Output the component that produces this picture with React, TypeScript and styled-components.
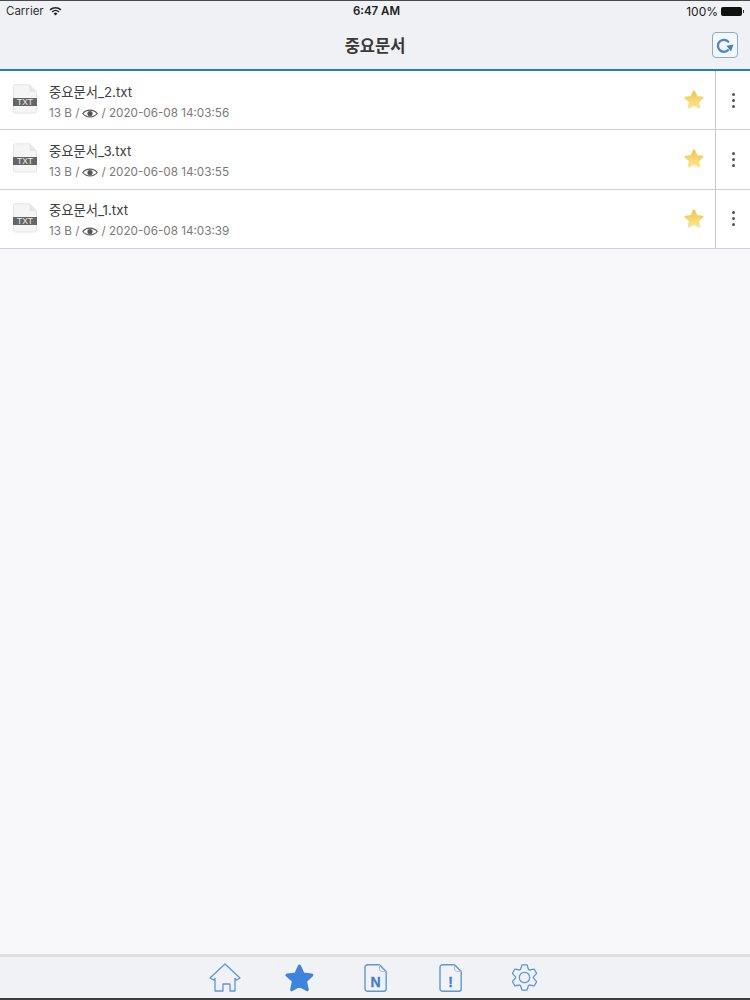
import React from "react";
import styled, { createGlobalStyle } from "styled-components";

const Global = createGlobalStyle`
  html, body { margin: 0; padding: 0; height: 100%; }
  body {
    background: #f8f8fa;
    font-family: "Inter", "Liberation Sans", "Noto Sans CJK KR", sans-serif;
    overflow: hidden;
  }
`;

const Screen = styled.div`
  width: 750px;
  height: 1000px;
  display: flex;
  flex-direction: column;
  background: #f8f8fa;
  border-top: 1px solid #4a4a4a;
  box-sizing: border-box;
`;

const Header = styled.header`
  height: 70px;
  box-sizing: border-box;
  flex: none;
  background: #eff1f4;
  border-bottom: 2px solid #1c84ba;
  display: flex;
  flex-direction: column;
`;

const StatusBar = styled.div`
  height: 20px;
  padding: 0 3px 0 6px;
  display: grid;
  grid-template-columns: 1fr auto 1fr;
  align-items: center;
  font-size: 12px;
  color: #222;
`;

const StatusLeft = styled.div`
  display: flex;
  align-items: center;
  gap: 5px;
  font-size: 11.5px;
  color: #333;
`;

const StatusTime = styled.div`
  font-weight: 600;
  font-size: 11.5px;
`;

const StatusRight = styled.div`
  display: flex;
  justify-content: flex-end;
  align-items: center;
  gap: 3px;
  font-size: 12px;
`;

const Battery = styled.div`
  width: 21px;
  height: 9px;
  border-radius: 2px;
  background: #111;
  margin-right: 5px;
  position: relative;
  &::after {
    content: "";
    position: absolute;
    right: -2px;
    top: 3px;
    width: 1.5px;
    height: 3px;
    background: #333;
  }
`;

const TitleRow = styled.div`
  flex: 1;
  display: grid;
  grid-template-columns: 1fr auto 1fr;
  align-items: center;
  padding-right: 12px;
  padding-left: 12px;
`;

const Title = styled.h1`
  grid-column: 2;
  margin: 0;
  font-family: "Noto Sans CJK KR", sans-serif;
  font-size: 16.5px;
  font-weight: 700;
  color: #3a3a3a;
`;

const RefreshButton = styled.button`
  grid-column: 3;
  justify-self: end;
  width: 26px;
  height: 26px;
  box-sizing: border-box;
  padding: 0;
  border: 1px solid #86acdc;
  border-radius: 4px;
  background: #f4f7fb;
  display: flex;
  align-items: center;
  justify-content: center;
`;

const List = styled.ul`
  list-style: none;
  margin: 0;
  padding: 0;
  background: #fff;
`;

const Row = styled.li`
  height: 59.5px;
  box-sizing: border-box;
  display: flex;
  align-items: stretch;
  border-bottom: 1px solid #cfcfd3;
  &:first-child {
    height: 59px;
  }
`;

const RowMain = styled.div`
  flex: 1;
  display: flex;
  align-items: center;
  padding: 0 10px 0 13px;
  gap: 12px;
`;

const FileGlyph = styled.div`
  display: flex;
  margin-bottom: 2px;
`;

const FileText = styled.div`
  flex: 1;
  display: flex;
  flex-direction: column;
  gap: 5px;
  padding-top: 3px;
`;

const FileName = styled.div`
  font-family: "Inter", "Noto Sans CJK KR", sans-serif;
  font-size: 13.3px;
  line-height: 18px;
  color: #404040;
`;

const Meta = styled.div`
  display: flex;
  align-items: center;
  gap: 3px;
  font-size: 11.7px;
  line-height: 15px;
  color: #7a7a7a;
`;

const StarWrap = styled.div`
  display: flex;
  margin-bottom: 1px;
`;

const MoreCell = styled.div`
  width: 35px;
  flex: none;
  box-sizing: border-box;
  border-left: 1px solid #c8c8cc;
  display: flex;
  align-items: center;
  justify-content: center;
`;

const Dots = styled.div`
  display: flex;
  flex-direction: column;
  gap: 3px;
  span {
    width: 3px;
    height: 3px;
    border-radius: 50%;
    background: #555;
  }
`;

const Spacer = styled.main`
  flex: 1;
`;

const TabBar = styled.nav`
  height: 46px;
  flex: none;
  box-sizing: border-box;
  background: #f0f2f5;
  border-top: 3px solid #dfdfe1;
  border-bottom: 2px solid #3e3e3e;
  display: flex;
  justify-content: center;
  align-items: center;
`;

const TabIcon = styled.div`
  width: 75px;
  display: flex;
  align-items: center;
  justify-content: center;
`;

const Wifi = () => (
  <svg width="13" height="10" viewBox="0 0 13 10">
    <path d="M.6 3.300a8.400 8.400 0 0 1 11.800 0l-1 1.100a7 7 0 0 0-9.800 0z" fill="#222" />
    <path d="M2.600 5.400a5.600 5.600 0 0 1 7.800 0l-1 1a4.200 4.200 0 0 0-5.800 0z" fill="#222" />
    <path d="M4.600 7.400a2.800 2.800 0 0 1 3.800 0L6.500 9.400z" fill="#222" />
  </svg>
);

const RefreshIcon = () => (
  <svg width="20" height="18" viewBox="0 0 20 18" fill="none">
    <path d="M13.300 5.700A6 6 0 1 0 13 14.200" stroke="#4a86d0" strokeWidth="2.300" strokeLinecap="round" />
    <path d="M11.500 9.800l7-1.200L16 15.500z" fill="#3f7fcf" />
  </svg>
);

const FileIcon = () => (
  <svg width="24" height="30" viewBox="0 0 24 30">
    <path d="M2 .8h14.500L23.500 8v19.500a1.500 1.500 0 0 1-1.500 1.500H2a1.500 1.500 0 0 1-1.500-1.500V2.300A1.500 1.500 0 0 1 2 .8z" fill="#f5f5f6" stroke="#e4e4e6" />
    <path d="M16.500.8V6.500A1.500 1.500 0 0 0 18 8h5.500z" fill="#e6e6e8" />
    <rect x="0" y="14" width="24" height="8" fill="#666" />
    <text x="12" y="21" textAnchor="middle" fontSize="8.500" fontFamily="Liberation Sans, sans-serif" fill="#ececec">TXT</text>
  </svg>
);

const Eye = () => (
  <svg width="16" height="11" viewBox="0 0 16 11" fill="none">
    <path d="M.8 5.500C4.300 1 11.700 1 15.200 5.500 11.700 10 4.300 10 .8 5.500z" stroke="#555" strokeWidth="1.200" />
    <circle cx="8" cy="5.500" r="2.600" fill="#555" />
  </svg>
);

const Star = ({ id }: { id: string }) => (
  <svg width="22" height="21" viewBox="0 0 22 21">
    <defs>
      <linearGradient id={id} x1="0" y1="0" x2="0" y2="1">
        <stop offset="0" stopColor="#f2c64a" />
        <stop offset="1" stopColor="#fbe592" />
      </linearGradient>
    </defs>
    <path
      d="M11 2.500l2.600 5.500 5.900.7-4.300 4.100 1.100 5.800L11 15.800l-5.300 2.800 1.100-5.800L2.500 8.700l5.900-.7z"
      fill={`url(#${id})`}
      stroke={`url(#${id})`}
      strokeWidth="2"
      strokeLinejoin="round"
    />
  </svg>
);

const HomeIcon = () => (
  <svg width="32" height="30" viewBox="0 0 32 30" fill="none" stroke="#5f96da" strokeWidth="1.300" strokeLinejoin="round">
    <path d="M16 1 31 15 27.500 17 26 15.500V28H21V21H14V28H6V15.500L4.500 17 1 15z" />
  </svg>
);

const FilledStar = () => (
  <svg width="30" height="28" viewBox="1.500 1 28 26.100">
    <path
      d="M15 3l3.400 7.500 8.100.9-6 5.500 1.700 8L15 20.900l-7.200 4 1.700-8-6-5.500 8.100-.9z"
      fill="#3f84dc"
      stroke="#3f84dc"
      strokeWidth="3"
      strokeLinejoin="round"
    />
  </svg>
);

const DocIcon = ({ mark }: { mark: string }) => (
  <svg width="23" height="28" viewBox="0 0 23 28" fill="none">
    <path d="M3.500 .8h12l6.700 6.700v17.200a2.500 2.500 0 0 1-2.500 2.500H3.500A2.500 2.500 0 0 1 1 24.700V3.300A2.500 2.500 0 0 1 3.500.8z" stroke="#5f96da" strokeWidth="1.400" />
    <path d="M15.500 .8v4.200a2.500 2.500 0 0 0 2.500 2.500h4.200" stroke="#a5c4ea" strokeWidth="1" />
    <text x="11.500" y="23" textAnchor="middle" fontSize="14" fontWeight="700" fontFamily="Liberation Sans, sans-serif" fill="#3f7fc8" stroke="#3f7fc8" strokeWidth="0.300">{mark}</text>
  </svg>
);

// six teeth, one pointing straight up
const gearPath = () => {
  const cx = 13.500;
  const cy = 13.500;
  const pts: string[] = [];
  for (let i = 0; i < 6; i++) {
    const a = (i * Math.PI) / 3 - Math.PI / 2;
    const at = (r: number, d: number) =>
      `${(cx + r * Math.cos(a + d)).toFixed(2)} ${(cy + r * Math.sin(a + d)).toFixed(2)}`;
    pts.push(at(9, -0.46), at(12.800, -0.2), at(12.800, 0.2), at(9, 0.46));
  }
  return `M${pts.join("L")}Z`;
};

const GearIcon = () => (
  <svg width="27" height="27" viewBox="1 0 27 27" fill="none" stroke="#5f96da" strokeWidth="1.300" strokeLinejoin="round">
    <path d={gearPath()} />
    <circle cx="13.500" cy="13.500" r="5.200" />
  </svg>
);

const files = [
  { name: "중요문서_2.txt", date: "2020-06-08 14:03:56" },
  { name: "중요문서_3.txt", date: "2020-06-08 14:03:55" },
  { name: "중요문서_1.txt", date: "2020-06-08 14:03:39" },
];

export default function App() {
  return (
    <>
      <Global />
      <Screen>
        <Header>
          <StatusBar>
            <StatusLeft>
              Carrier <Wifi />
            </StatusLeft>
            <StatusTime>6:47 AM</StatusTime>
            <StatusRight>
              100% <Battery />
            </StatusRight>
          </StatusBar>
          <TitleRow>
            <Title>중요문서</Title>
            <RefreshButton>
              <RefreshIcon />
            </RefreshButton>
          </TitleRow>
        </Header>
        <List>
          {files.map((f, i) => (
            <Row key={f.name}>
              <RowMain>
                <FileGlyph>
                  <FileIcon />
                </FileGlyph>
                <FileText>
                  <FileName>{f.name}</FileName>
                  <Meta>
                    13 B / <Eye /> / {f.date}
                  </Meta>
                </FileText>
                <StarWrap>
                  <Star id={`gold${i}`} />
                </StarWrap>
              </RowMain>
              <MoreCell>
                <Dots>
                  <span />
                  <span />
                  <span />
                </Dots>
              </MoreCell>
            </Row>
          ))}
        </List>
        <Spacer />
        <TabBar>
          <TabIcon><HomeIcon /></TabIcon>
          <TabIcon><FilledStar /></TabIcon>
          <TabIcon><DocIcon mark="N" /></TabIcon>
          <TabIcon><DocIcon mark="!" /></TabIcon>
          <TabIcon><GearIcon /></TabIcon>
        </TabBar>
      </Screen>
    </>
  );
}
